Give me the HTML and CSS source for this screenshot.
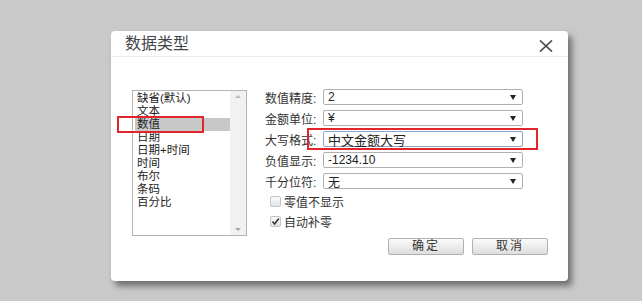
FILE: index.html
```html
<!DOCTYPE html>
<html lang="zh-CN">
<head>
    <meta charset="UTF-8" />
    <title>数据类型</title>
    <link rel="stylesheet" href="styles.css">
</head>
<body>
    <div class="dialog">
        <header class="dialog-head">
            <h1>数据类型</h1>
            <span class="close">
                <svg width="14" height="12" viewBox="0 0 14 12">
                    <path d="M1 0.5 L13 11.5 M13 0.5 L1 11.5" stroke="#444" stroke-width="1.6" fill="none" />
                </svg>
            </span>
        </header>
        <main class="dialog-body">
            <div class="top-row">
                <div class="type-list">
                    <ul>
                        <li>缺省(默认)</li>
                        <li>文本</li>
                        <li class="selected">数值</li>
                        <li>日期</li>
                        <li>日期+时间</li>
                        <li>时间</li>
                        <li>布尔</li>
                        <li>条码</li>
                        <li>百分比</li>
                    </ul>
                    <div class="scrollbar">
                        <span class="arrow up"></span>
                        <span class="arrow down"></span>
                    </div>
                </div>
                <div class="form">
                    <div class="field">
                        <label>数值精度:</label>
                        <div class="select"><span>2</span><i class="caret"></i></div>
                    </div>
                    <div class="field">
                        <label>金额单位:</label>
                        <div class="select"><span>¥</span><i class="caret"></i></div>
                    </div>
                    <div class="field">
                        <label>大写格式:</label>
                        <div class="select focus"><span>中文金额大写</span><i class="caret"></i></div>
                    </div>
                    <div class="field">
                        <label>负值显示:</label>
                        <div class="select"><span>-1234.10</span><i class="caret"></i></div>
                    </div>
                    <div class="field">
                        <label>千分位符:</label>
                        <div class="select"><span>无</span><i class="caret"></i></div>
                    </div>
                    <div class="check first">
                        <span class="box"></span>
                        <span>零值不显示</span>
                    </div>
                    <div class="check">
                        <span class="box checked">
                            <svg width="9" height="9" viewBox="0 0 9 9">
                                <path d="M1.5 4.5 L3.6 7 L7.8 1.5" stroke="#333" stroke-width="1.5" fill="none" />
                            </svg>
                        </span>
                        <span>自动补零</span>
                    </div>
                </div>
            </div>
            <div class="buttons">
                <button>确定</button>
                <button>取消</button>
            </div>
        </main>
        <!-- annotation marks -->
        <div class="mark mark-list"></div>
        <div class="mark mark-format"></div>
    </div>
</body>
</html>
```

FILE: styles.css
```css
* {
    margin: 0;
    padding: 0;
    box-sizing: border-box;
}
body {
    height: 100vh;
    background-color: #c9c9c9;
    padding: 31px 0 0 111px;
    font-family: "Liberation Sans", "Noto Sans CJK SC", sans-serif;
    font-size: 12px;
    color: #333;
}
.dialog {
    position: relative;
    width: 457px;
    height: 250px;
    background-color: #fff;
    border-radius: 4px;
    box-shadow: 4px 5px 6px rgba(0, 0, 0, 0.45);
}
.dialog-head {
    height: 26px;
    display: flex;
    align-items: center;
    justify-content: space-between;
    padding: 0 15px 0 14px;
    border-bottom: 1px solid #ececec;
}
.dialog-head h1 {
    font-size: 16px;
    font-weight: normal;
    color: #444;
    line-height: 20px;
}
.close {
    display: flex;
    margin-top: 4px;
}
.dialog-body {
    padding: 33px 20px 0 21px;
}
.top-row {
    display: flex;
    gap: 18px;
}
.type-list {
    width: 115px;
    height: 146px;
    border: 1px solid #b4b4b4;
    display: flex;
}
.type-list ul {
    flex: 1;
    list-style: none;
    padding: 1px 0 0 2px;
}
.type-list li {
    height: 13px;
    line-height: 13px;
    font-size: 11.5px;
    padding-left: 2px;
    color: #222;
}
.type-list li.selected {
    background-color: #c8c8c8;
}
.scrollbar {
    width: 16px;
    background-color: #f1f1f1;
    display: flex;
    flex-direction: column;
    justify-content: space-between;
    align-items: center;
    padding: 4px 0;
}
.arrow {
    width: 0;
    height: 0;
    border-left: 3px solid transparent;
    border-right: 3px solid transparent;
}
.arrow.up {
    border-bottom: 3px solid #b8b8b8;
}
.arrow.down {
    border-top: 3px solid #a8a8a8;
}
.form {
    display: flex;
    flex-direction: column;
    margin-top: -1px;
}
.field {
    display: flex;
    align-items: center;
    height: 16px;
    margin-bottom: 5px;
}
.field label {
    width: 58px;
    color: #333;
}
.select {
    width: 200px;
    height: 16px;
    border: 1px solid #b0b0b0;
    border-radius: 2px;
    display: flex;
    align-items: center;
    justify-content: space-between;
    padding: 0 6px 0 4px;
    color: #222;
    background-color: #fff;
}
.select.focus {
    border-color: #8aa4cf;
    font-size: 13px;
}
.caret {
    width: 0;
    height: 0;
    border-left: 3px solid transparent;
    border-right: 3px solid transparent;
    border-top: 5px solid #222;
}
.check {
    display: flex;
    align-items: center;
    gap: 3px;
    height: 20px;
    padding-left: 5px;
}
.check.first {
    margin-top: -3px;
}
.box {
    width: 11px;
    height: 11px;
    border: 1px solid #c4c4c4;
    border-radius: 2px;
    background: linear-gradient(#fafafa, #e4e4e4);
    display: flex;
    align-items: center;
    justify-content: center;
}
.buttons {
    display: flex;
    justify-content: flex-end;
    gap: 8px;
    margin-top: 2px;
}
.buttons button {
    width: 76px;
    height: 17px;
    border: 1px solid #b0b0b0;
    border-radius: 2px;
    background: linear-gradient(#fbfbfb, #dedede);
    font-family: inherit;
    font-size: 12px;
    letter-spacing: 2px;
    color: #333;
    line-height: 15px;
}
.mark {
    position: absolute;
    border: 2px solid #e0262a;
}
.mark-list {
    left: 6px;
    top: 85px;
    width: 87px;
    height: 17px;
}
.mark-format {
    left: 196px;
    top: 97px;
    width: 231px;
    height: 22px;
}
```
